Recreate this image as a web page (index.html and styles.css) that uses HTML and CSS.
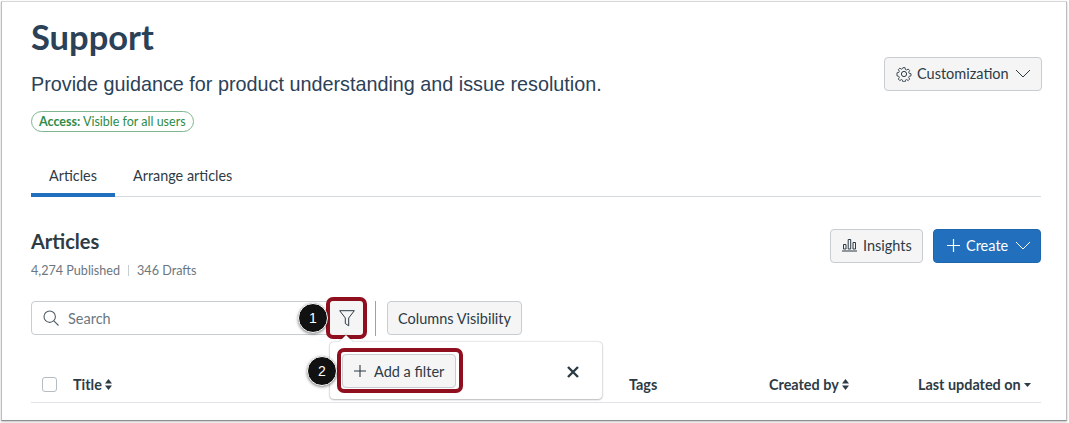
FILE: index.html
```html
<!DOCTYPE html>
<html lang="en">
<head>
<meta charset="utf-8">
<title>Support</title>
<link rel="stylesheet" href="styles.css">
</head>
<body>
<main class="frame">
  <header class="head">
    <div class="head-text">
      <h1 class="title">Support</h1>
      <p class="subtitle">Provide guidance for product understanding and issue resolution.</p>
      <span class="pill"><b>Access:</b> Visible for all users</span>
    </div>
    <button class="btn btn-custom">
      <svg class="ico" width="16" height="16" viewBox="0 0 16 16" fill="none" stroke="#2d3b45" stroke-width="1"><path d="M6.8 1h2.4l.4 2 1.3.6 1.8-1.1 1.6 1.7-1.1 1.7.6 1.4 2 .4v2.4l-2 .4-.6 1.4 1.1 1.7-1.6 1.7-1.8-1.1-1.3.6-.4 2H6.800l-.4-2-1.300-.6-1.800 1.100-1.600-1.700 1.100-1.700-.6-1.400-2-.4V6.700l2-.4.6-1.400-1.100-1.700 1.600-1.700 1.800 1.100 1.300-.6z" transform="translate(.8 .8) scale(.9)"/><circle cx="8" cy="8" r="2.600"/></svg>
      <span>Customization</span>
      <svg class="chev" width="16" height="9" viewBox="0 0 16 9" fill="none" stroke="#2d3b45" stroke-width="1"><path d="M1 1l7 7 7-7"/></svg>
    </button>
  </header>

  <nav class="tabs">
    <a class="tab tab-on">Articles</a>
    <a class="tab">Arrange articles</a>
  </nav>

  <section class="sec-head">
    <div>
      <h2 class="sec-title">Articles</h2>
      <p class="stats"><span>4,274 Published</span><i class="sep"></i><span>346 Drafts</span></p>
    </div>
    <div class="actions">
      <button class="btn btn-insights">
        <svg class="ico" width="15" height="14" viewBox="0 0 15 14" fill="none" stroke="#2d3b45" stroke-width="1"><path d="M0 13h15M1.500 6.500h2.500v4.500H1.500zM6.200 1.500h2.500V11H6.200zM11 4.500h2.500V11H11z"/></svg>
        <span>Insights</span>
      </button>
      <button class="btn btn-create">
        <svg class="ico" width="13" height="13" viewBox="0 0 13 13" stroke="#fff" stroke-width="1.200"><path d="M6.500 0v13M0 6.500h13"/></svg>
        <span>Create</span>
        <svg class="chev" width="16" height="9" viewBox="0 0 16 9" fill="none" stroke="#fff" stroke-width="1"><path d="M1 1l7 7 7-7"/></svg>
      </button>
    </div>
  </section>

  <section class="toolbar">
    <label class="search">
      <svg width="16" height="16" viewBox="0 0 16 16" fill="none" stroke="#4f5d68" stroke-width="1.100"><circle cx="6.700" cy="6.700" r="5.700"/><path d="M10.900 10.900l4.600 4.600"/></svg>
      <span>Search</span>
    </label>
    <div class="filter-wrap">
      <button class="btn-filter">
        <svg width="16" height="17" viewBox="0 0 16 17" fill="none" stroke="#2d3b45" stroke-width="1"><path d="M.7.700h14.600L9.700 8v7.800L6.300 13.500V8z"/></svg>
      </button>
      <span class="callout-ring ring-filter"></span>
      <span class="badge badge-1">1</span>
      <div class="popover">
        <button class="btn btn-add">
          <svg width="12" height="12" viewBox="0 0 12 12" stroke="#2d3b45" stroke-width="1.100"><path d="M6 0v12M0 6h12"/></svg>
          <span>Add a filter</span>
        </button>
        <svg class="close" width="12" height="12" viewBox="0 0 12 12" stroke="#2d3b45" stroke-width="2.400"><path d="M1 1l10 10M11 1L1 11"/></svg>
        <span class="callout-ring ring-add"></span>
        <span class="badge badge-2">2</span>
      </div>
    </div>
    <i class="divider"></i>
    <button class="btn btn-cols">Columns Visibility</button>
  </section>

  <section class="thead">
    <span class="check"></span>
    <span class="th th-title">Title <svg class="sort" width="7" height="11" viewBox="0 0 7 11" fill="#2d3b45"><path d="M3.500 0L7 4.500H0zM3.500 11L0 6.500h7z"/></svg></span>
    <span class="th th-tags">Tags</span>
    <span class="th th-by">Created by <svg class="sort" width="7" height="11" viewBox="0 0 7 11" fill="#2d3b45"><path d="M3.500 0L7 4.500H0zM3.500 11L0 6.500h7z"/></svg></span>
    <span class="th th-up">Last updated on <svg class="sort sort-down" width="7" height="4" viewBox="0 0 7 4" fill="#2d3b45"><path d="M0 0h7L3.500 4z"/></svg></span>
  </section>
</main>
</body>
</html>
```
FILE: styles.css
```css
* { box-sizing: border-box; }
html, body { margin: 0; padding: 0; background: #fff; }
body { width: 1069px; height: 423px; overflow: hidden; font-family: Lato, "Liberation Sans", sans-serif; color: #2d3b45; }
.frame {
  margin: 1px 0 0 1px;
  width: 1066px;
  height: 420px;
  background: #fff;
  border: 1px solid #d8d8d8;
  border-left-color: #bdbdbd;
  border-right-color: #bdbdbd;
  border-bottom: 1px solid #8e8e8e;
  box-shadow: 0 1px 2px rgba(0,0,0,.25);
  padding: 0 25px 0 29px;
  overflow: hidden;
}
.head { display: flex; justify-content: space-between; align-items: flex-start; height: 150px; }
.title { margin: 13px 0 0; font-size: 34.5px; line-height: 44px; font-weight: 700; color: #2b4157; }
.subtitle { margin: 12px 0 0; font-family: "Liberation Sans", sans-serif; font-size: 19.8px; line-height: 26px; color: #2b4157; }
.pill {
  display: inline-block;
  margin-top: 14px;
  height: 21px;
  padding: 0 7px;
  border: 1px solid #7fb68f;
  border-radius: 11px;
  font-size: 12.5px;
  line-height: 19px;
  color: #2e8b46;
  white-space: nowrap;
}
.pill b { font-weight: 700; }
.btn {
  display: inline-flex;
  align-items: center;
  font-family: Lato, sans-serif;
  font-size: 14.5px;
  color: #2d3b45;
  background: #f5f5f5;
  border: 1px solid #c7cdd1;
  border-radius: 4px;
  padding: 0;
  white-space: nowrap;
}
.btn-custom { margin: 55px -1px 0 0; height: 34px; width: 158px; padding: 0 0 1px 11px; }
.btn-custom .ico { margin-right: 5px; }
.btn-custom .chev { margin-left: 6px; }
.tabs { display: flex; height: 45px; border-bottom: 1px solid #d5dade; }
.tab { width: 84px; height: 45px; padding-top: 15px; text-align: center; font-size: 14.4px; line-height: 18px; color: #2d3b45; }
.tab + .tab { width: auto; margin-left: 18px; }
.tab-on { border-bottom: 4px solid #2270bd; }
.sec-head { display: flex; justify-content: space-between; height: 104px; }
.sec-title { margin: 32px 0 0; font-size: 20px; line-height: 25px; font-weight: 700; color: #2d3b45; }
.stats { margin: 9px 0 0; display: flex; align-items: center; font-size: 12.6px; line-height: 15px; color: #6b7780; }
.sep { width: 1px; height: 11px; margin: 0 8px; background: #c7cdd1; }
.actions { display: flex; gap: 10px; margin-top: 32px; }
.btn-insights { height: 34px; width: 93px; padding: 0 0 2px 11px; }
.btn-insights .ico { margin-right: 6px; }
.btn-create { height: 34px; width: 108px; padding: 0 0 2px 13px; background: #2270bd; border-color: #1e66ad; color: #fff; }
.btn-create .ico { margin-right: 6px; }
.btn-create .chev { margin-left: 7px; }
.toolbar { display: flex; align-items: flex-start; height: 65px; }
.search {
  display: flex;
  align-items: center;
  gap: 9px;
  width: 300px;
  height: 34px;
  padding-left: 11px;
  border: 1px solid #c7cdd1;
  border-radius: 4px;
  font-size: 14.5px;
  color: #6b7780;
}
.filter-wrap { position: relative; width: 35px; height: 35px; margin-left: -2px; }
.btn-filter {
  display: flex; align-items: center; justify-content: center;
  width: 36px; height: 35px; padding: 0;
  background: #f5f5f5; border: 0; border-radius: 4px;
}
.callout-ring { position: absolute; border: 4px solid #8f0f1e; border-radius: 7px; pointer-events: none; }
.ring-filter { left: -3px; top: -4px; width: 41px; height: 42px; }
.badge {
  position: absolute;
  width: 30px; height: 30px;
  border-radius: 50%;
  background: #111;
  border: 1px solid #fff;
  box-shadow: 0 1px 3px rgba(0,0,0,.5);
  color: #fff;
  font-family: "Liberation Sans", sans-serif;
  font-size: 14px;
  line-height: 28px;
  text-align: center;
}
.badge-1 { left: -31px; top: 2px; }
.badge-2 { left: -23px; top: 14px; }
.popover {
  position: absolute;
  left: 1px; top: 41px;
  width: 272px; height: 57px;
  background: #fff;
  border-radius: 4px;
  box-shadow: 0 0 2px rgba(0,0,0,.3), 0 1px 2px rgba(0,0,0,.2);
}
.popover::before {
  content: "";
  position: absolute;
  left: 11px; top: -5px;
  width: 10px; height: 10px;
  background: #fff;
  transform: rotate(45deg);
  box-shadow: -1px -1px 2px rgba(0,0,0,.15);
}
.btn-add { position: absolute; left: 12px; top: 12px; width: 114px; height: 34px; padding-left: 11px; gap: 8px; font-size: 14.5px; }
.close { position: absolute; left: 237px; top: 24px; }
.ring-add { left: 7px; top: 6px; width: 126px; height: 45px; }
.divider { width: 1px; height: 35px; margin: 0 11px 0 11px; background: #9aa3a9; }
.btn-cols { height: 34px; width: 135px; justify-content: center; font-size: 14.5px; }
.thead { position: relative; display: flex; align-items: center; height: 37px; border-bottom: 1px solid #e0e4e7; font-size: 14.4px; font-weight: 700; }
.check { width: 15px; height: 15px; margin-left: 11px; border: 1px solid #b4bbc1; border-radius: 3px; background: #fff; }
.th { white-space: nowrap; color: #2d3b45; }
.th-title { margin-left: 16px; width: 556px; }
.th-tags { width: 140px; }
.th-by { width: 149px; }
.sort { vertical-align: 0; }
.sort-down { vertical-align: 3px; }
```
